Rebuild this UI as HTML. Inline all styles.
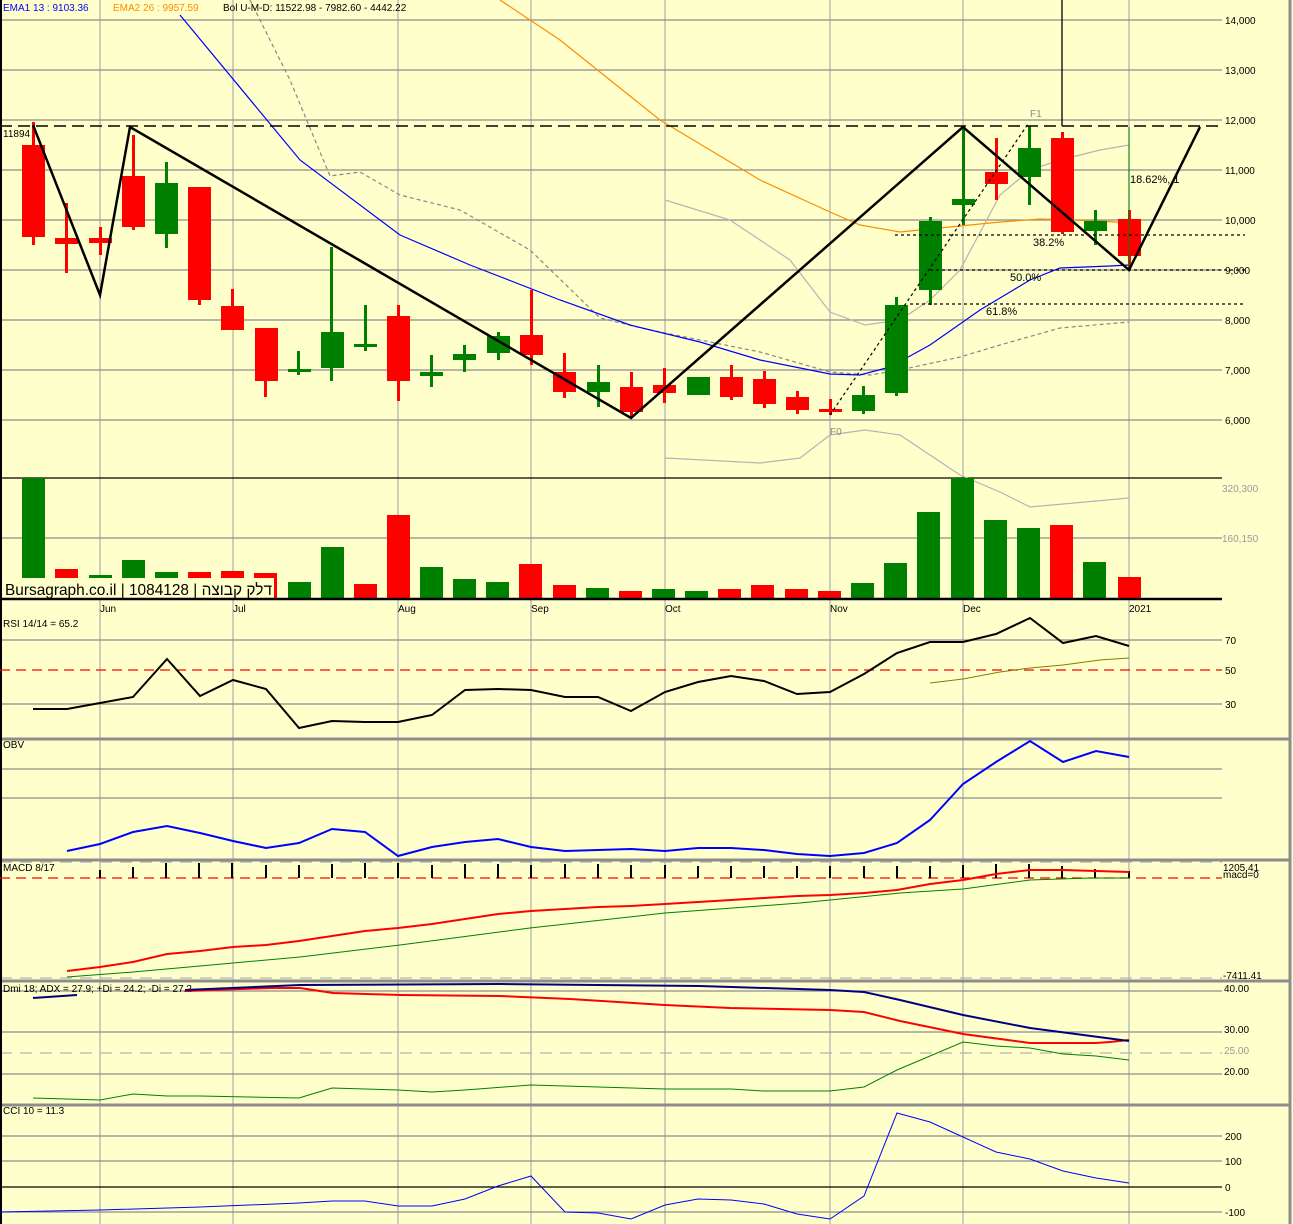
<!DOCTYPE html>
<html><head><meta charset="utf-8"><style>
html,body{margin:0;padding:0;background:#FFFFCC;}
svg{display:block;font-family:"Liberation Sans",Arial,sans-serif;}
</style></head><body>
<svg width="1293" height="1224" viewBox="0 0 1293 1224" xmlns="http://www.w3.org/2000/svg">
<rect width="1293" height="1224" fill="#FFFFCC"/>
<g stroke="#b4b4b4" stroke-width="1.3">
<line x1="100" y1="0" x2="100" y2="1224"/><line x1="233" y1="0" x2="233" y2="1224"/><line x1="398" y1="0" x2="398" y2="1224"/><line x1="531" y1="0" x2="531" y2="1224"/><line x1="665" y1="0" x2="665" y2="1224"/><line x1="830" y1="0" x2="830" y2="1224"/><line x1="963" y1="0" x2="963" y2="1224"/><line x1="1129" y1="0" x2="1129" y2="1224"/>
</g>
<g stroke="#8c8c8c" stroke-width="1.3">
<line x1="0" y1="20" x2="1222" y2="20"/><line x1="0" y1="70" x2="1222" y2="70"/><line x1="0" y1="170" x2="1222" y2="170"/><line x1="0" y1="220" x2="1222" y2="220"/><line x1="0" y1="270" x2="1222" y2="270"/><line x1="0" y1="320" x2="1222" y2="320"/><line x1="0" y1="370" x2="1222" y2="370"/><line x1="0" y1="420" x2="1222" y2="420"/><line x1="0" y1="120" x2="1222" y2="120"/>
<line x1="0" y1="538" x2="1222" y2="538"/>
<line x1="0" y1="640" x2="1222" y2="640"/><line x1="0" y1="704" x2="1222" y2="704"/>
<line x1="0" y1="769" x2="1222" y2="769"/><line x1="0" y1="798" x2="1222" y2="798"/>
<line x1="0" y1="991" x2="1222" y2="991"/><line x1="0" y1="1032" x2="1222" y2="1032"/><line x1="0" y1="1074" x2="1222" y2="1074"/>
<line x1="0" y1="1136" x2="1222" y2="1136"/><line x1="0" y1="1161" x2="1222" y2="1161"/><line x1="0" y1="1212" x2="1222" y2="1212"/>
</g>
<g stroke="#b4b4b4" stroke-width="1.3" stroke-dasharray="12,8">
<line x1="0" y1="1053" x2="1222" y2="1053"/><line x1="0" y1="978" x2="1222" y2="978"/><line x1="0" y1="862" x2="1222" y2="862"/>
</g>
<line x1="0" y1="1187" x2="1222" y2="1187" stroke="#000" stroke-width="1.3"/>
<g stroke="#8c8c8c" stroke-width="3">
<line x1="0" y1="739" x2="1289" y2="739"/><line x1="0" y1="860" x2="1289" y2="860"/><line x1="0" y1="981" x2="1289" y2="981"/><line x1="0" y1="1105" x2="1289" y2="1105"/>
</g>
<line x1="1290" y1="0" x2="1290" y2="1224" stroke="#8c8c8c" stroke-width="3"/>
<line x1="1" y1="0" x2="1" y2="1224" stroke="#000" stroke-width="2"/>
<line x1="0" y1="478" x2="1222" y2="478" stroke="#000" stroke-width="1.3"/>

<polyline fill="none" stroke="#b4b4b4" stroke-width="1.2" points="665,200 730,220 790,260 830,312 865,325 900,320 930,300 960,270 1000,195 1030,170 1060,160 1100,150 1129,145"/>
<polyline fill="none" stroke="#b4b4b4" stroke-width="1.2" points="665,458 760,463 800,458 830,435 865,430 900,435 930,455 960,475 1000,492 1030,507 1129,498"/>
<polyline fill="none" stroke="#888" stroke-width="1.2" stroke-dasharray="4,3" points="250,0 290,80 330,176 360,172 400,195 460,210 530,250 600,318 650,330 700,340 760,352 830,372 870,375 900,370 960,357 1000,345 1060,328 1129,322"/>
<polyline fill="none" stroke="#ff8c00" stroke-width="1.2" points="500,0 560,40 660,120 760,180 830,212 860,225 900,232 950,227 1000,222 1040,219 1100,221 1129,223"/>
<polyline fill="none" stroke="#0000ff" stroke-width="1.2" points="180,15 300,160 400,235 470,265 560,300 630,325 700,342 760,360 830,374 860,375 890,367 930,345 980,310 1030,280 1060,268 1110,266 1129,265"/>

<g fill="#ff0000">
<rect x="32" y="122" width="3" height="123"/><rect x="22" y="145" width="23" height="92"/>
<rect x="65" y="203" width="3" height="70"/><rect x="55" y="238" width="23" height="6"/>
<rect x="99" y="227" width="3" height="28"/><rect x="89" y="238" width="23" height="5"/>
<rect x="132" y="135" width="3" height="95"/><rect x="122" y="176" width="23" height="51"/>
<rect x="198" y="187" width="3" height="118"/><rect x="188" y="187" width="23" height="113"/>
<rect x="231" y="289" width="3" height="41"/><rect x="221" y="306" width="23" height="24"/>
<rect x="264" y="328" width="3" height="69"/><rect x="255" y="328" width="23" height="53"/>
<rect x="397" y="305" width="3" height="96"/><rect x="387" y="316" width="23" height="65"/>
<rect x="530" y="290" width="3" height="75"/><rect x="520" y="335" width="23" height="20"/>
<rect x="563" y="353" width="3" height="45"/><rect x="553" y="372" width="23" height="20"/>
<rect x="630" y="372" width="3" height="46"/><rect x="620" y="387" width="23" height="25"/>
<rect x="663" y="368" width="3" height="35"/><rect x="653" y="385" width="23" height="8"/>
<rect x="730" y="365" width="3" height="35"/><rect x="720" y="377" width="23" height="20"/>
<rect x="763" y="371" width="3" height="37"/><rect x="753" y="379" width="23" height="25"/>
<rect x="796" y="391" width="3" height="23"/><rect x="786" y="397" width="23" height="13"/>
<rect x="829" y="399" width="3" height="16"/><rect x="819" y="409" width="23" height="3"/>
<rect x="995" y="138" width="3" height="62"/><rect x="985" y="172" width="23" height="12"/>
<rect x="1061" y="132" width="3" height="102"/><rect x="1051" y="138" width="23" height="94"/>
<rect x="1128" y="210" width="3" height="60"/><rect x="1118" y="219" width="23" height="37"/>
</g>
<g fill="#008000">
<rect x="165" y="162" width="3" height="86"/><rect x="155" y="183" width="23" height="51"/>
<rect x="297" y="351" width="3" height="24"/><rect x="288" y="369" width="23" height="3"/>
<rect x="330" y="247" width="3" height="134"/><rect x="321" y="332" width="23" height="36"/>
<rect x="364" y="305" width="3" height="46"/><rect x="354" y="344" width="23" height="3"/>
<rect x="430" y="355" width="3" height="32"/><rect x="420" y="372" width="23" height="4"/>
<rect x="463" y="345" width="3" height="27"/><rect x="453" y="354" width="23" height="6"/>
<rect x="497" y="332" width="3" height="28"/><rect x="487" y="336" width="23" height="17"/>
<rect x="597" y="365" width="3" height="42"/><rect x="587" y="382" width="23" height="10"/>
<rect x="697" y="377" width="3" height="18"/><rect x="687" y="377" width="23" height="18"/>
<rect x="862" y="386" width="3" height="28"/><rect x="852" y="395" width="23" height="16"/>
<rect x="895" y="297" width="3" height="99"/><rect x="885" y="305" width="23" height="88"/>
<rect x="929" y="217" width="3" height="88"/><rect x="919" y="221" width="23" height="69"/>
<rect x="962" y="128" width="3" height="97"/><rect x="952" y="199" width="23" height="6"/>
<rect x="1028" y="126" width="3" height="79"/><rect x="1018" y="148" width="23" height="29"/>
<rect x="1094" y="210" width="3" height="35"/><rect x="1084" y="221" width="23" height="10"/>
</g>

<line x1="1062" y1="0" x2="1062" y2="126" stroke="#000" stroke-width="1.3"/>
<line x1="1129" y1="127" x2="1129" y2="270" stroke="#008000" stroke-width="1"/>
<line x1="0" y1="126" x2="1222" y2="126" stroke="#000" stroke-width="1.5" stroke-dasharray="12,6"/>
<g stroke="#000" stroke-width="1.2" stroke-dasharray="3,3">
<line x1="895" y1="235" x2="1245" y2="235"/><line x1="930" y1="270" x2="1245" y2="270"/><line x1="910" y1="304" x2="1245" y2="304"/>
<line x1="830" y1="415" x2="1028" y2="124"/>
</g>
<polyline fill="none" stroke="#000" stroke-width="2.5" points="33,125 100,295 130,127 631,418 963,127 1129,270 1200,127"/>
<g font-size="11" fill="#000">
<text x="1033" y="246">38.2%</text><text x="1010" y="281">50.0%</text><text x="986" y="315">61.8%</text>
<text x="1130" y="183">18.62%, 1</text>
</g>
<g font-size="10" fill="#888"><text x="1030" y="117">F1</text><text x="830" y="435">F0</text></g>
<text x="3" y="137" font-size="10" fill="#000">11894</text>

<g fill="#008000">
<rect x="22" y="478" width="23" height="120"/><rect x="89" y="575" width="23" height="23"/><rect x="122" y="560" width="23" height="38"/><rect x="155" y="572" width="23" height="26"/>
<rect x="288" y="582" width="23" height="16"/><rect x="321" y="547" width="23" height="51"/><rect x="420" y="567" width="23" height="31"/><rect x="453" y="579" width="23" height="19"/><rect x="486" y="582" width="23" height="16"/>
<rect x="586" y="588" width="23" height="10"/><rect x="652" y="589" width="23" height="9"/><rect x="685" y="591" width="23" height="7"/>
<rect x="851" y="583" width="23" height="15"/><rect x="884" y="563" width="23" height="35"/><rect x="917" y="512" width="23" height="86"/><rect x="951" y="478" width="23" height="120"/><rect x="984" y="520" width="23" height="78"/><rect x="1017" y="528" width="23" height="70"/><rect x="1083" y="562" width="23" height="36"/>
</g>
<g fill="#ff0000">
<rect x="55" y="569" width="23" height="29"/><rect x="188" y="572" width="23" height="26"/><rect x="221" y="571" width="23" height="27"/><rect x="254" y="573" width="23" height="25"/>
<rect x="354" y="584" width="23" height="14"/><rect x="387" y="515" width="23" height="83"/><rect x="519" y="564" width="23" height="34"/><rect x="553" y="585" width="23" height="13"/><rect x="619" y="591" width="23" height="7"/>
<rect x="718" y="589" width="23" height="9"/><rect x="751" y="585" width="23" height="13"/><rect x="785" y="589" width="23" height="9"/><rect x="818" y="591" width="23" height="7"/><rect x="1050" y="525" width="23" height="73"/><rect x="1118" y="577" width="23" height="21"/>
</g>
<rect x="2" y="578" width="272" height="21" fill="#FFFFCC"/>
<text x="5" y="595" font-size="16" textLength="267" lengthAdjust="spacingAndGlyphs" fill="#000" style='font-family:"Liberation Sans","Noto Sans CJK JP",sans-serif'>Bursagraph.co.il | 1084128 | דלק קבוצה</text>
<line x1="0" y1="599" x2="1222" y2="599" stroke="#000" stroke-width="2.5"/>

<g font-size="10">
<text x="3" y="11" fill="#0000ff">EMA1 13 : 9103.36</text>
<text x="113" y="11" fill="#ff8c00">EMA2 26 : 9957.59</text>
<text x="223" y="11" fill="#000">Bol U-M-D: 11522.98 - 7982.60 - 4442.22</text>
<text x="3" y="627" fill="#000">RSI 14/14 = 65.2</text>
<text x="3" y="748" fill="#000">OBV</text>
<text x="3" y="871" fill="#000">MACD 8/17</text>
<text x="3" y="992" fill="#000">Dmi 18; ADX = 27.9; +Di = 24.2; -Di = 27.2</text>
<text x="3" y="1114" fill="#000">CCI 10 = 11.3</text>
</g>
<g font-size="10" fill="#000">
<text x="1225" y="24">14,000</text><text x="1225" y="74">13,000</text><text x="1225" y="124">12,000</text><text x="1225" y="174">11,000</text><text x="1225" y="224">10,000</text><text x="1225" y="274">9,000</text><text x="1225" y="324">8,000</text><text x="1225" y="374">7,000</text><text x="1225" y="424">6,000</text>
<text x="1225" y="644">70</text><text x="1225" y="674">50</text><text x="1225" y="708">30</text>
<text x="1223" y="871">1205.41</text><text x="1223" y="878">macd=0</text><text x="1223" y="979">-7411.41</text>
<text x="1224" y="992">40.00</text><text x="1224" y="1033">30.00</text><text x="1224" y="1075">20.00</text>
<text x="1225" y="1140">200</text><text x="1225" y="1165">100</text><text x="1225" y="1191">0</text><text x="1225" y="1216">-100</text>
<text x="100" y="612">Jun</text><text x="233" y="612">Jul</text><text x="398" y="612">Aug</text><text x="531" y="612">Sep</text><text x="665" y="612">Oct</text><text x="830" y="612">Nov</text><text x="963" y="612">Dec</text><text x="1129" y="612">2021</text>
</g>
<g font-size="10" fill="#999"><text x="1222" y="492">320,300</text><text x="1222" y="542">160,150</text><text x="1224" y="1054">25.00</text></g>

<line x1="0" y1="670" x2="1222" y2="670" stroke="#ff0000" stroke-width="1.3" stroke-dasharray="10,6"/>
<polyline fill="none" stroke="#808000" stroke-width="1" points="930,683 963,679 1000,672 1030,668 1063,665 1100,660 1129,658"/>
<polyline fill="none" stroke="#000" stroke-width="2" points="33,709 67,709 100,703 133,697 167,659 200,696 233,680 266,689 299,728 332,721 365,722 398,722 432,715 465,690 498,689 531,690 565,697 598,697 631,711 665,692 698,682 731,676 764,681 797,694 830,692 864,674 897,653 930,642 963,642 996,634 1030,618 1063,643 1096,636 1129,646"/>
<polyline fill="none" stroke="#0000ff" stroke-width="2" points="67,851 100,844 133,832 167,826 200,833 233,841 266,848 299,843 332,829 365,832 398,856 432,847 465,842 498,839 531,847 565,851 598,850 631,849 665,851 698,848 731,848 764,850 797,854 830,856 864,853 897,843 930,820 963,784 996,762 1030,741 1063,762 1096,751 1129,757"/>
<line x1="0" y1="878" x2="1222" y2="878" stroke="#ff0000" stroke-width="1.3" stroke-dasharray="10,6"/>
<g stroke="#000" stroke-width="2">
<line x1="100" y1="870" x2="100" y2="878"/><line x1="133" y1="867" x2="133" y2="878"/><line x1="166" y1="863" x2="166" y2="878"/><line x1="199" y1="863" x2="199" y2="878"/><line x1="232" y1="863" x2="232" y2="878"/><line x1="266" y1="865" x2="266" y2="878"/><line x1="299" y1="865" x2="299" y2="878"/><line x1="332" y1="864" x2="332" y2="878"/><line x1="365" y1="863" x2="365" y2="878"/><line x1="398" y1="863" x2="398" y2="878"/><line x1="432" y1="865" x2="432" y2="878"/><line x1="465" y1="864" x2="465" y2="878"/><line x1="498" y1="864" x2="498" y2="878"/><line x1="531" y1="865" x2="531" y2="878"/><line x1="565" y1="864" x2="565" y2="878"/><line x1="598" y1="864" x2="598" y2="878"/><line x1="631" y1="865" x2="631" y2="878"/><line x1="665" y1="865" x2="665" y2="878"/><line x1="698" y1="866" x2="698" y2="878"/><line x1="731" y1="866" x2="731" y2="878"/><line x1="764" y1="866" x2="764" y2="878"/><line x1="797" y1="866" x2="797" y2="878"/><line x1="830" y1="866" x2="830" y2="878"/><line x1="864" y1="866" x2="864" y2="878"/><line x1="897" y1="866" x2="897" y2="878"/><line x1="930" y1="866" x2="930" y2="878"/><line x1="963" y1="865" x2="963" y2="878"/><line x1="996" y1="864" x2="996" y2="878"/><line x1="1029" y1="864" x2="1029" y2="878"/><line x1="1062" y1="866" x2="1062" y2="878"/><line x1="1095" y1="869" x2="1095" y2="878"/><line x1="1129" y1="871" x2="1129" y2="878"/>
</g>
<polyline fill="none" stroke="#008000" stroke-width="1" points="67,977 133,972 200,966 300,957 400,945 530,928 665,913 800,903 900,893 963,889 1030,880 1090,878 1129,878"/>
<polyline fill="none" stroke="#ff0000" stroke-width="2" points="67,971 100,967 133,962 167,954 200,951 233,947 266,945 299,941 332,936 365,931 398,928 432,924 465,919 498,914 531,911 565,909 598,907 631,906 665,904 698,902 731,900 764,898 797,896 830,895 864,893 897,890 930,884 963,880 996,874 1030,870 1063,870 1096,871 1129,872"/>
<polyline fill="none" stroke="#008000" stroke-width="1" points="33,1098 100,1100 133,1094 167,1096 200,1096 299,1098 332,1088 365,1089 398,1090 432,1092 465,1090 531,1085 565,1086 665,1089 731,1089 764,1091 830,1091 864,1087 897,1070 963,1042 996,1046 1030,1048 1063,1054 1096,1056 1129,1060"/>
<polyline fill="none" stroke="#ff0000" stroke-width="2" points="185,991 270,988 300,988 333,993 400,995 500,996 570,999 665,1005 730,1008 830,1010 864,1012 900,1021 963,1034 1030,1043 1063,1043 1096,1043 1110,1042 1129,1040"/>
<polyline fill="none" stroke="#000080" stroke-width="2" points="185,990 300,985 500,984 700,986 830,990 864,992 900,1000 963,1015 1030,1028 1129,1041"/>
<polyline fill="none" stroke="#000080" stroke-width="2" points="33,998 77,995"/>
<polyline fill="none" stroke="#0000ff" stroke-width="1" points="0,1212 100,1210 200,1207 299,1203 332,1201 365,1201 398,1206 432,1206 465,1199 498,1186 531,1176 565,1212 598,1213 631,1219 665,1205 698,1199 731,1200 764,1204 797,1214 830,1219 864,1196 897,1113 930,1122 963,1137 996,1152 1030,1159 1063,1171 1096,1178 1129,1183"/>
</svg>
</body></html>
